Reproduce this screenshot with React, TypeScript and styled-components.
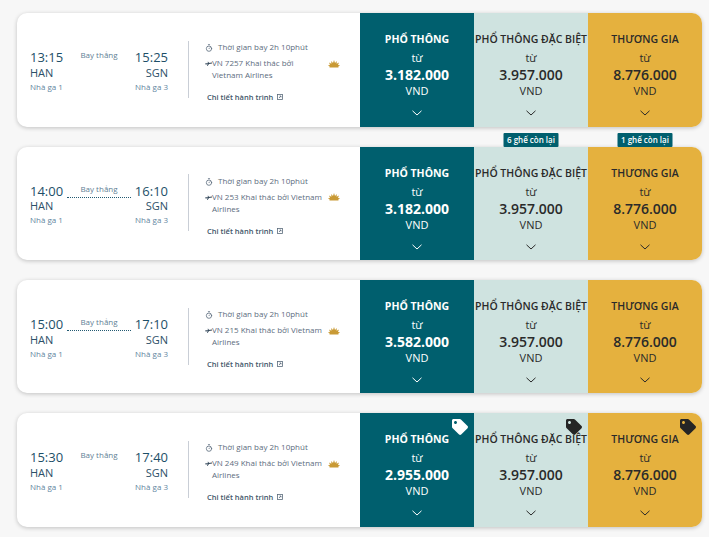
import React from "react";
import styled, { createGlobalStyle } from "styled-components";
import { FaTag } from "react-icons/fa";
import { Timer } from "lucide-react";

const Global = createGlobalStyle`
  html, body { margin: 0; padding: 0; background: #f7f7f7; }
  body { font-family: "Open Sans", "Noto Sans", sans-serif; overflow: hidden; }
`;

const Page = styled.div`
  width: 709px;
  height: 537px;
  box-sizing: border-box;
  padding: 13.4px 7px 0 17px;
  display: flex;
  flex-direction: column;
  gap: 20px;
`;

const Card = styled.div`
  position: relative;
  display: flex;
  height: 113.33px;
  border-radius: 10px;
  background: #fff;
  box-shadow: 0 1px 4px rgba(0, 0, 0, 0.22);
`;

const Route = styled.div`
  width: 151px;
  flex: none;
  box-sizing: border-box;
  padding: 36px 0 0 13px;
  display: flex;
  align-items: flex-start;
`;

const Endpoint = styled.div<{ $end?: boolean }>`
  width: 37px;
  flex: none;
  display: flex;
  flex-direction: column;
  align-items: ${(p) => (p.$end ? "flex-end" : "flex-start")};
`;

const Time = styled.div`
  font-size: 13px;
  line-height: 16px;
  color: #1d4f68;
`;

const Code = styled.div`
  font-size: 11px;
  line-height: 14px;
  margin-top: 0.5px;
  color: #2d5068;
`;

const Terminal = styled.div`
  font-size: 8px;
  line-height: 12px;
  margin-top: 1px;
  color: #5f86a0;
`;

const Middle = styled.div`
  flex: 1;
  display: flex;
  flex-direction: column;
  align-items: center;
`;

const Stop = styled.div<{ $line: boolean }>`
  width: 100%;
  box-sizing: border-box;
  height: 15px;
  font-size: 8px;
  line-height: 12px;
  text-align: center;
  color: #5f7f96;
  border-bottom: ${(p) => (p.$line ? "1px dotted #235a72" : "1px solid transparent")};
`;

const Divider = styled.div`
  width: 1px;
  height: 57px;
  flex: none;
  align-self: center;
  background: #c9ced6;
  margin: -1px 0 0 20px;
`;

const Info = styled.div`
  flex: 1;
  box-sizing: border-box;
  padding: 28px 0 0 16px;
  display: flex;
  flex-direction: column;
  color: #5c6c7e;
  font-size: 8px;
  line-height: 12px;
`;

const Duration = styled.div`
  display: flex;
  align-items: center;
  gap: 5.5px;
  height: 12px;
  svg { flex: none; margin: 2px 0 0 -0.5px; }
`;

const FlightRow = styled.div`
  position: relative;
  margin-top: 4px;
  padding: 0 0 0 7px;
  width: 118px;
`;

const Flight = styled.div`
  width: 112px;
`;

const SmallPlane = styled.svg`
  position: absolute;
  left: 0;
  top: 4px;
`;

const Lotus = styled.svg`
  position: absolute;
  left: 123px;
  top: 2.5px;
`;

const Details = styled.div`
  display: flex;
  align-items: center;
  gap: 4px;
  margin: 10px 0 0 2px;
  font-size: 7.5px;
  line-height: 12px;
  font-weight: 600;
  color: #3f5569;
`;

const Fare = styled.div<{ $kind: "eco" | "special" | "biz" }>`
  position: relative;
  width: 114px;
  flex: none;
  display: flex;
  flex-direction: column;
  align-items: center;
  padding-top: 18px;
  box-sizing: border-box;
  white-space: nowrap;
  background: ${(p) => (p.$kind === "eco" ? "#005f6e" : p.$kind === "special" ? "#cfe3e0" : "#e5b13e")};
  color: ${(p) => (p.$kind === "eco" ? "#ffffff" : "#2a2a2a")};
  border-radius: ${(p) => (p.$kind === "biz" ? "0 10px 10px 0" : "0")};
`;

const FareTitle = styled.div<{ $bold: boolean }>`
  font-size: 10.5px;
  line-height: 16px;
  font-weight: ${(p) => (p.$bold ? 700 : 600)};
`;

const From = styled.div`
  font-size: 11px;
  line-height: 15px;
  margin-top: 3px;
`;

const Price = styled.div<{ $bold: boolean }>`
  font-size: 14px;
  line-height: 18px;
  font-weight: ${(p) => (p.$bold ? 700 : 600)};
  margin-top: 1px;
`;

const Currency = styled.div`
  font-size: 11px;
  line-height: 15px;
  margin-top: -1px;
`;

const Chevron = styled.svg`
  margin-top: 12px;
`;

const SeatBadge = styled.div`
  position: absolute;
  top: -14px;
  left: 50%;
  transform: translateX(-50%);
  height: 14px;
  width: 55px;
  text-align: center;
  background: #005f6e;
  color: #fff;
  font-size: 8px;
  line-height: 14px;
  font-weight: 600;
  border-radius: 1px;
`;

const TagMark = styled.div<{ $light: boolean }>`
  position: absolute;
  top: 6px;
  right: 6px;
  display: flex;
  color: ${(p) => (p.$light ? "#ffffff" : "#252525")};
`;

type FareData = { kind: "eco" | "special" | "biz"; title: string; price: string; seats?: string };

type FlightData = {
  dep: string;
  arr: string;
  no: string;
  line: boolean;
  eco: string;
  seats?: boolean;
  tags?: boolean;
};

const flights: FlightData[] = [
  { dep: "13:15", arr: "15:25", no: "VN 7257", line: false, eco: "3.182.000" },
  { dep: "14:00", arr: "16:10", no: "VN 253", line: true, eco: "3.182.000", seats: true },
  { dep: "15:00", arr: "17:10", no: "VN 215", line: true, eco: "3.582.000" },
  { dep: "15:30", arr: "17:40", no: "VN 249", line: false, eco: "2.955.000", tags: true },
];

function FareCell({ fare, tag }: { fare: FareData; tag?: boolean }) {
  const bold = fare.kind === "eco";
  return (
    <Fare $kind={fare.kind}>
      {fare.seats && <SeatBadge>{fare.seats}</SeatBadge>}
      {tag && (
        <TagMark $light={bold}>
          <FaTag size={16} />
        </TagMark>
      )}
      <FareTitle $bold={bold}>{fare.title}</FareTitle>
      <From>từ</From>
      <Price $bold={bold}>{fare.price}</Price>
      <Currency>VND</Currency>
      <Chevron width="10" height="6" viewBox="0 0 10 6" fill="none" stroke="currentColor" strokeWidth="1">
        <path d="M0.5 0.8 L5 5 L9.5 0.8" />
      </Chevron>
    </Fare>
  );
}

function FlightCard({ f }: { f: FlightData }) {
  return (
    <Card>
      <Route>
        <Endpoint>
          <Time>{f.dep}</Time>
          <Code>HAN</Code>
          <Terminal>Nhà ga 1</Terminal>
        </Endpoint>
        <Middle>
          <Stop $line={f.line}>Bay thẳng</Stop>
        </Middle>
        <Endpoint $end>
          <Time>{f.arr}</Time>
          <Code>SGN</Code>
          <Terminal>Nhà ga 3</Terminal>
        </Endpoint>
      </Route>
      <Divider />
      <Info>
        <Duration>
          <Timer size={8} strokeWidth={2.4} />
          Thời gian bay 2h 10phút
        </Duration>
        <FlightRow>
          <SmallPlane width="7" height="5" viewBox="0 0 7 5">
            <path d="M0 2.6 L7 1.6 L7 2.4 L4 3 L2.6 5 L2 5 L2.7 3.2 L0.6 3.4 Z M2.6 0.8 L3.2 0.8 L4 2 L3 2.2 Z" fill="#33475a" />
          </SmallPlane>
          <Flight>{`${f.no} Khai thác bởi Vietnam Airlines`}</Flight>
          <Lotus width="12" height="8" viewBox="0 0 12 8">
            <path
              d="M6 0 L7 3 L8.8 1 L8.6 3.8 L11 2.6 L10 5 L12 5.2 L10.2 6.8 L10.6 7.6 L1.4 7.6 L1.8 6.8 L0 5.2 L2 5 L1 2.6 L3.4 3.8 L3.2 1 L5 3 Z"
              fill="#c99a35"
            />
          </Lotus>
        </FlightRow>
        <Details>
          Chi tiết hành trình
          <svg width="6" height="6" viewBox="0 0 6 6" fill="none" stroke="#5a6b7c" strokeWidth="0.8">
            <rect x="0.5" y="0.5" width="5" height="5" />
            <path d="M2 4 L4 2 M2.6 2 H4 V3.4" />
          </svg>
        </Details>
      </Info>
      <FareCell fare={{ kind: "eco", title: "PHỔ THÔNG", price: f.eco }} tag={f.tags} />
      <FareCell
        fare={{ kind: "special", title: "PHỔ THÔNG ĐẶC BIỆT", price: "3.957.000", seats: f.seats ? "6 ghế còn lại" : undefined }}
        tag={f.tags}
      />
      <FareCell
        fare={{ kind: "biz", title: "THƯƠNG GIA", price: "8.776.000", seats: f.seats ? "1 ghế còn lại" : undefined }}
        tag={f.tags}
      />
    </Card>
  );
}

export default function App() {
  return (
    <>
      <Global />
      <Page>
        {flights.map((f) => (
          <FlightCard key={f.no} f={f} />
        ))}
      </Page>
    </>
  );
}
